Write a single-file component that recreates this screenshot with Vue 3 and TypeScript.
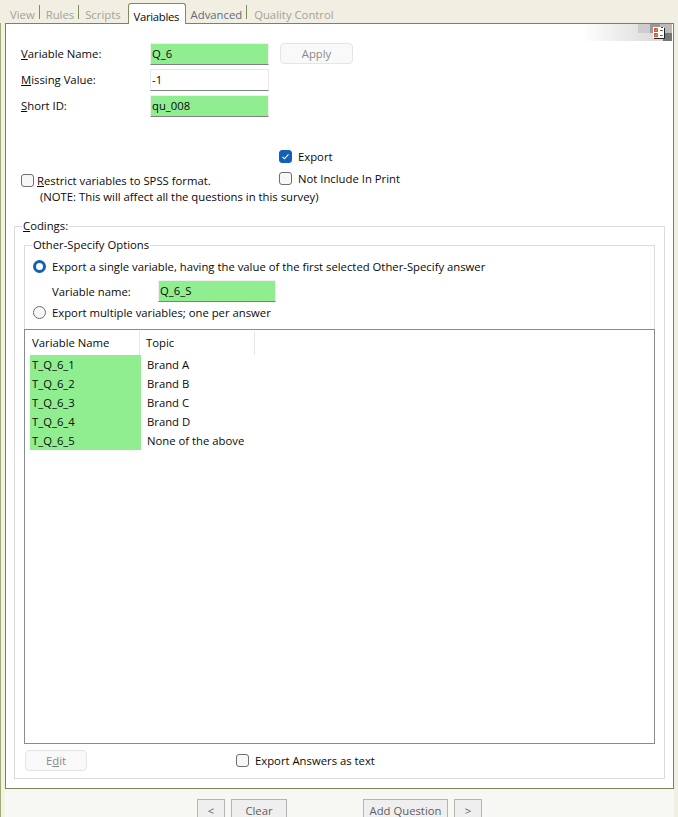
<script setup lang="ts">
const tabs = [
  { label: 'View', cls: 'off view' },
  { label: 'Rules', cls: 'off' },
  { label: 'Scripts', cls: 'off scripts' },
  { label: 'Variables', cls: 'active' },
  { label: 'Advanced', cls: 'plain' },
  { label: 'Quality Control', cls: 'off last' },
]
const rows = [
  ['T_Q_6_1', 'Brand A'],
  ['T_Q_6_2', 'Brand B'],
  ['T_Q_6_3', 'Brand C'],
  ['T_Q_6_4', 'Brand D'],
  ['T_Q_6_5', 'None of the above'],
]
</script>

<template>
  <div class="page">
    <div class="tabs">
      <div v-for="t in tabs" :key="t.label" class="tab" :class="t.cls">{{ t.label }}</div>
    </div>
    <div class="panel">
      <div class="corner">
        <svg class="corner-icon" width="12" height="12" viewBox="0 0 12 12">
          <rect x="0" y="0" width="11" height="11" fill="#fff" />
          <path d="M11.5 1v10.5H1" fill="none" stroke="#222" />
          <path d="M8 .5h2" stroke="#444" />
          <rect x="1" y="1" width="4" height="4" fill="#ee4c3c" />
          <rect x="1" y="6" width="4" height="4" fill="#ee4c3c" />
          <path d="M2 3l1 1 2-3M2 8l1 1 2-3" fill="none" stroke="#9cc04a" />
          <path d="M7 3.5h3M7 8.5h3" stroke="#666" />
        </svg>
      </div>
      <div class="top">
        <div class="fields">
          <div class="field"><label><u>V</u>ariable Name:</label><div class="input green">Q_6</div></div>
          <div class="field"><label><u>M</u>issing Value:</label><div class="input">-1</div></div>
          <div class="field"><label><u>S</u>hort ID:</label><div class="input green">qu_008</div></div>
        </div>
        <div class="btn apply">Apply</div>
      </div>
      <div class="opts">
        <div class="spss">
          <div class="check-row tight"><span class="box"></span><span><u>R</u>estrict variables to SPSS format.</span></div>
          <div class="note">(NOTE: This will affect all the questions in this survey)</div>
        </div>
        <div class="exports">
          <div class="check-row">
            <span class="box checked">
              <svg width="13" height="13" viewBox="0 0 13 13"><path d="M3.5 6.8l2 2 4-4.4" fill="none" stroke="#fff" stroke-width="1.1" /></svg>
            </span>
            <span>Export</span>
          </div>
          <div class="check-row"><span class="box"></span><span>Not Include In Print</span></div>
        </div>
      </div>
      <fieldset class="codings">
        <legend><u>C</u>odings:</legend>
        <fieldset class="other">
          <legend>Other-Specify Options</legend>
          <div class="radio-row"><span class="radio on"></span><span>Export a single variable, having the value of the first selected Other-Specify answer</span></div>
          <div class="varname"><label>Variable name:</label><div class="input green small">Q_6_S</div></div>
          <div class="radio-row"><span class="radio"></span><span>Export multiple variables; one per answer</span></div>
        </fieldset>
        <div class="list">
          <div class="head">
            <div class="h1">Variable Name</div>
            <div class="h2">Topic</div>
          </div>
          <div v-for="r in rows" :key="r[0]" class="row">
            <div class="c1">{{ r[0] }}</div>
            <div class="c2">{{ r[1] }}</div>
          </div>
        </div>
        <div class="foot">
          <div class="btn edit">E<u>d</u>it</div>
          <div class="check-row"><span class="box"></span><span>Export Answers as text</span></div>
        </div>
      </fieldset>
    </div>
    <div class="bottom">
      <div class="nav lt">&lt;</div>
      <div class="nav clear">Clear</div>
      <div class="nav add">Add Question</div>
      <div class="nav gt">&gt;</div>
    </div>
  </div>
</template>

<style>
html, body { margin: 0; background: #f1eee2; }
</style>

<style scoped>
.page {
  width: 678px;
  height: 817px;
  overflow: hidden;
  background: linear-gradient(90deg, #9dac7c 0 1px, #f4f3df 1px 5px, transparent 5px) no-repeat 0 23px / 5px 100%, #f1eee2;
  font-family: "Open Sans", "Noto Sans", sans-serif;
  font-size: 11.3px;
  color: #0a0a0a;
  box-sizing: border-box;
  padding-left: 5px;
}
.tabs { display: flex; height: 23px; align-items: flex-end; }
.tab { position: relative; padding: 0 5px 0 6px; height: 18px; line-height: 20px; color: #a3a39b; white-space: nowrap; }
.tab.view { padding-left: 5px; }
.tab.off::after, .tab.plain::after { content: ""; position: absolute; right: 0; top: 0; height: 14px; width: 1px; background: #7e8f5e; }
.tab.scripts { padding-right: 7px; }
.tab.scripts::after, .tab.last::after { display: none; }
.tab.last { padding-left: 7px; }
.tab.active {
  width: 58px; box-sizing: border-box; height: 21px; line-height: 26px; color: #0a0a0a; background: #fff;
  border: 1px solid #7e8f5e; border-bottom: 0; border-radius: 3px 3px 0 0;
  margin-bottom: -1px; z-index: 1; padding: 0 0 0 5px; letter-spacing: -0.3px;
}
.tab.plain { color: #5d6b7c; padding: 0 5px 0 5px; }
.panel {
  position: relative;
  width: 669px;
  height: 766px;
  box-sizing: border-box;
  background: #fff;
  border: 1px solid #74875a;
}
.corner {
  position: absolute; right: 1px; top: 0; width: 90px; height: 17px;
  background:
    linear-gradient(#767676, #767676) no-repeat 81px 9px / 9px 8px,
    linear-gradient(#999, #999) no-repeat 68px 0 / 10px 9px,
    linear-gradient(#bbb, #bbb) no-repeat 78px 0 / 12px 9px,
    linear-gradient(#ccc, #ccc) no-repeat 56px 0 / 12px 9px,
    linear-gradient(90deg, #fff, #dcdcdc 80%);
}
.corner-icon { position: absolute; right: 7px; top: 3px; }
.top { display: flex; padding: 19px 0 0 15px; }
.fields { display: flex; flex-direction: column; gap: 5px; }
.field { display: flex; align-items: center; height: 21px; }
.field label { width: 129px; }
.input {
  width: 119px; height: 22px; box-sizing: border-box; padding: 0 1px; line-height: 19px;
  background: #fff; border: 1px solid #e8e8e8; border-bottom: 1px solid #808080;
}
.input.green { background: #90ee90; border-color: #f0f0f0; border-bottom-color: #808080; }
.input.small { width: 118px; }
.btn {
  box-sizing: border-box; border: 1px solid #e5e5e5; border-radius: 4px;
  background: #f9f9f9; color: #8a8a8a; text-align: center;
}
.apply { width: 73px; height: 21px; line-height: 20px; margin-left: 11px; }
.opts { display: flex; height: 97px; padding-left: 15px; margin-top: 5px; }
.spss { margin-top: 53px; width: 258px; }
.exports { display: flex; flex-direction: column; gap: 9px; margin-top: 29px; }
.check-row { display: flex; align-items: center; gap: 6px; height: 13px; white-space: nowrap; }
.check-row.tight { gap: 3px; }
.box {
  display: block; width: 13px; height: 13px; box-sizing: border-box; flex: none;
  border: 1px solid #6e6e6e; border-radius: 3px; background: #f7f7f7;
}
.box.checked { background: #0f62b8; border-color: #0f62b8; }
.box.checked svg { display: block; margin: -1px; }
.note { margin: 2px 0 0 19px; white-space: nowrap; line-height: 16px; }
fieldset { margin: 0; min-width: 0; padding: 0; }
legend { padding: 0 1px; line-height: 16px; }
.codings {
  margin: 0 8px 0 8px;
  height: 561px;
  box-sizing: border-box;
  border: 1px solid #dcdcdc;
  padding: 0 9px;
}
.codings > legend { margin-left: -2px; }
.other {
  height: 92px; box-sizing: border-box; border: 1px solid #dcdcdc; border-bottom: 0; padding: 0 0 0 8px; margin-top: 3px;
}
.other > legend { margin-left: -1px; }
.radio-row { display: flex; align-items: center; gap: 6px; height: 14px; margin-top: 6px; white-space: nowrap; }
.radio { box-sizing: border-box; width: 13px; height: 13px; border-radius: 50%; border: 1px solid #6e6e6e; background: #f7f7f7; flex: none; }
.radio.on { border: 3.5px solid #0f62b8; background: #fff; }
.varname { display: flex; align-items: center; height: 22px; margin: 7px 0 -3px 19px; }
.varname label { width: 106px; }
.list { height: 415px; box-sizing: border-box; border: 1px solid #8a8a92; padding: 1px 0 0 5px; }
.head { display: flex; height: 24px; line-height: 24px; }
.h1 { width: 110px; padding-left: 2px; box-sizing: border-box; border-right: 1px solid #e8e8e8; }
.h2 { width: 115px; padding-left: 6px; box-sizing: border-box; border-right: 1px solid #e8e8e8; }
.row { display: flex; height: 19px; line-height: 19px; }
.c1 { width: 111px; background: #90ee90; padding-left: 2px; box-sizing: border-box; }
.c2 { padding-left: 6px; }
.foot { display: flex; align-items: center; height: 21px; margin-top: 6px; padding-left: 1px; }
.edit { width: 62px; height: 21px; line-height: 20px; margin-right: 149px; }
.bottom {
  width: 669px; height: 28px; background: #f7f7f3; overflow: hidden;
  display: flex;
  padding: 10px 0 0 192px;
  box-sizing: border-box;
}
.nav {
  height: 24px; box-sizing: border-box; border: 1px solid #b5b5b5; background: #efefef;
  color: #5f5f5f; text-align: center; line-height: 22px; flex: none;
}
.lt { width: 28px; }
.clear { width: 56px; margin-left: 6px; }
.add { width: 85px; margin-left: 76px; }
.gt { width: 28px; margin-left: 6px; }
</style>
